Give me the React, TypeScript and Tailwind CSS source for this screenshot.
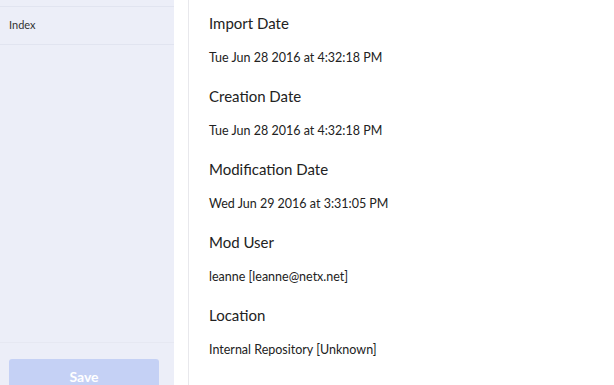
import React from 'react';

const fields = [
  { label: 'Import Date', value: 'Tue Jun 28 2016 at 4:32:18 PM' },
  { label: 'Creation Date', value: 'Tue Jun 28 2016 at 4:32:18 PM' },
  { label: 'Modification Date', value: 'Wed Jun 29 2016 at 3:31:05 PM' },
  { label: 'Mod User', value: 'leanne [leanne@netx.net]' },
  { label: 'Location', value: 'Internal Repository [Unknown]' },
];

const App: React.FC = () => {
  return (
    <div className="flex h-[385px] w-[614px] overflow-hidden bg-white font-['Lato',sans-serif] text-[#222]">
      <aside className="flex w-[174px] shrink-0 flex-col bg-[#eceef8]">
        <div className="mt-[6px] border-t border-[#e1e4f0]" />
        <div className="flex h-[38px] items-center border-b border-[#e1e4f0] px-[9px] text-[11px] text-[#333]">
          Index
        </div>
        <div className="flex-1" />
        <div className="border-t border-[#e6e8f2]" />
        <div className="h-[42px] pl-[9px] pr-[15px] pt-[16px]">
          <button className="h-[34px] w-full rounded-[3px] bg-[#c5d1f5] text-[14px] font-bold text-white">
            Save
          </button>
        </div>
      </aside>
      <div className="ml-[14px] w-px bg-[#e8e8ec]" />
      <main className="flex flex-col pl-[20px] pt-[13px]">
        {fields.map((f) => (
          <section key={f.label} className="h-[73px]">
            <h3 className="text-[15px] leading-[20px] text-[#222]">{f.label}</h3>
            <p className="mt-[17px] text-[12.5px] leading-[16px] text-[#222]">{f.value}</p>
          </section>
        ))}
      </main>
    </div>
  );
};

export default App;
